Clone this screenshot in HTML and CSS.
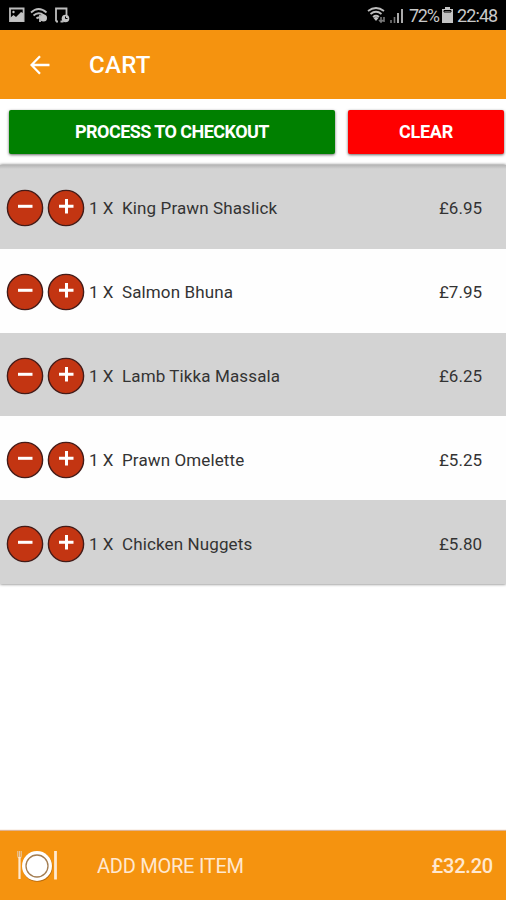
FILE: index.html
```html
<!DOCTYPE html>
<html lang="en">
<head>
<meta charset="utf-8">
<title>Cart</title>
<link rel="stylesheet" href="styles.css">
</head>
<body>
<svg class="defs" aria-hidden="true">
  <symbol id="minus" viewBox="0 0 38 38"><circle cx="19" cy="19" r="17.6"/><path d="M12 17.3h14.5"/></symbol>
  <symbol id="plus" viewBox="0 0 38 38"><circle cx="19" cy="19" r="17.6"/><path d="M12 17.3h14.5M19.500 10v14.500"/></symbol>
</svg>
<div class="status">
  <svg class="status-left" viewBox="0 0 62 17" width="62" height="17">
    <path class="line" d="M2 1.500h13.600v12.600H2z"/>
    <path class="fill" d="M2 11l3.500-3 2.500 2 5-5 2 1v8H2z"/><circle class="fill" cx="5.500" cy="5" r="1.200"/>
    <path class="line" d="M23 5.500q7.500-7 15.500 0M25.500 8.500q5-4.500 10.500 0M28.500 11.500q2-2 4 0M32 8v7"/>
    <circle class="fill" cx="35.500" cy="11" r="3.500"/>
    <path class="line" d="M48 14.500V1.500h10.500V8M48 14.500h2M52.500 14.500h3"/>
    <circle class="fill" cx="57.500" cy="11.500" r="3.800"/><path class="dark" d="M57.500 9.500v2h2"/>
  </svg>
  <div class="status-right">
    <svg viewBox="0 0 38 18" width="38" height="18">
      <path class="line" d="M1 4q8-6 16 0M3.500 7q5.500-4.500 11 0M6 10q3-2.500 6 0"/>
      <path class="fill" d="M6.500 11q2.500-2 5 0L9 14z"/>
      <path class="dim" d="M14 10v5M12 13l2 2 2-2M17 15v-5"/>
      <path class="dim" d="M24 16v-3M27.500 16v-6"/><path class="line" d="M31 16V6M35 16V2"/>
    </svg>
    <span class="percent">72%</span>
    <svg class="battery" viewBox="0 0 11 17" width="11" height="17"><path class="fill" d="M3 0h5v2h3v14H0V2h3z"/><path class="dark" d="M2 5V3.500h7V5z"/></svg>
    <span class="time">22:48</span>
  </div>
</div>
<header class="appbar">
  <svg class="back" viewBox="0 0 20 20" width="20" height="20"><path d="M19.500 10H1.800M10 1.300L1.500 10 10 18.700"/></svg>
  <h1>CART</h1>
</header>
<div class="actions">
  <button class="checkout">PROCESS TO CHECKOUT</button>
  <button class="clear">CLEAR</button>
</div>
<main class="cart">
  <div class="row"><svg class="btn"><use href="#minus"/></svg><svg class="btn"><use href="#plus"/></svg><span class="qty">1 X</span><span class="name">King Prawn Shaslick</span><span class="price">£6.95</span></div>
  <div class="row"><svg class="btn"><use href="#minus"/></svg><svg class="btn"><use href="#plus"/></svg><span class="qty">1 X</span><span class="name">Salmon Bhuna</span><span class="price">£7.95</span></div>
  <div class="row"><svg class="btn"><use href="#minus"/></svg><svg class="btn"><use href="#plus"/></svg><span class="qty">1 X</span><span class="name">Lamb Tikka Massala</span><span class="price">£6.25</span></div>
  <div class="row"><svg class="btn"><use href="#minus"/></svg><svg class="btn"><use href="#plus"/></svg><span class="qty">1 X</span><span class="name">Prawn Omelette</span><span class="price">£5.25</span></div>
  <div class="row"><svg class="btn"><use href="#minus"/></svg><svg class="btn"><use href="#plus"/></svg><span class="qty">1 X</span><span class="name">Chicken Nuggets</span><span class="price">£5.80</span></div>
</main>
<footer class="bottom">
  <svg class="plate" viewBox="0 0 42 34" width="42" height="34">
    <circle class="shade" cx="21.500" cy="17.800" r="15"/>
    <circle class="rim" cx="21" cy="17" r="15"/>
    <circle class="ring" cx="21" cy="17" r="11"/>
    <path class="prongs" d="M1.800 2v5q0 2 1.700 2t1.700-2V2M3.500 2v6"/>
    <path class="handle" d="M3.500 8v22"/>
    <path class="knife" d="M39.500 2v28.500"/>
  </svg>
  <span class="more">ADD MORE ITEM</span>
  <span class="total">£32.20</span>
</footer>
</body>
</html>
```

FILE: styles.css
```css
* { box-sizing: border-box; }
body {
  margin: 0;
  height: 900px;
  display: flex;
  flex-direction: column;
  background: #fff;
  font-family: Roboto, "Liberation Sans", sans-serif;
  overflow: hidden;
}
.defs { display: none; }
.status {
  height: 30px;
  flex: none;
  background: #000;
  color: #c9c9c9;
  display: flex;
  justify-content: space-between;
  padding: 0 9px 0 8px;
}
.status svg { fill: none; }
.status-left { margin-top: 7px; }
.status .line { stroke: #bdbdbd; stroke-width: 1.8; }
.status .dim { stroke: #777; stroke-width: 1.6; }
.status .fill { fill: #c4c4c4; }
.status .dark { stroke: #000; stroke-width: 1; }
.status-right { display: flex; align-items: center; font-size: 18px; padding-top: 1px; }
.percent { width: 31px; margin: 0 2px 0 4px; letter-spacing: -1.3px; }
.status-right > svg:first-child { margin-left: -6px; }
.battery { margin: 0 4px 0 0; }
.time { width: 40px; letter-spacing: -0.9px; }
.appbar {
  height: 69px;
  flex: none;
  background: #f5930f;
  color: #fff;
  display: flex;
  align-items: center;
  padding-left: 30px;
}
.back { fill: none; stroke: #fff; stroke-width: 2.3; }
h1 { margin: 0 0 0 39px; font-size: 24px; font-weight: 500; line-height: 28px; letter-spacing: .3px; }
.actions {
  height: 66px;
  flex: none;
  display: flex;
  gap: 13px;
  padding: 11px 2px 0 9px;
}
.actions button {
  height: 44px;
  border: 0;
  border-radius: 2px;
  padding: 0 0 2px;
  color: #fff;
  font: 700 18px Roboto, "Liberation Sans", sans-serif;
  letter-spacing: -.55px;
  box-shadow: 0 1px 3px rgba(0, 0, 0, .6);
}
.checkout { width: 326px; background: #008000; }
.actions .clear { flex: 1; background: #f00; letter-spacing: -.3px; }
.cart {
  height: 419px;
  flex: none;
  display: grid;
  grid-template-rows: repeat(5, 1fr);
  box-shadow: 0 0 3px rgba(0, 0, 0, .65);
}
.row {
  display: flex;
  align-items: center;
  padding: 3px 24px 0 6px;
  background: #fefefe;
  color: #333;
  font-size: 17px;
}
.row:nth-child(odd) { background: #d3d3d3; }
.row:first-child { background: linear-gradient(#b5b5b5, #d3d3d3 4px); }
.btn { width: 38px; height: 38px; margin-right: 3px; fill: #c33512; stroke: #431b18; stroke-width: 1.4; }
#minus path, #plus path { stroke: #fff; stroke-width: 3; }
.qty { width: 33px; margin-left: 1px; }
.name { flex: 1; letter-spacing: .12px; }
.bottom {
  height: 69px;
  flex: none;
  margin-top: auto;
  display: flex;
  align-items: center;
  padding: 0 13px 0 16px;
  color: #ffe8d0;
  background: #f5930f;
  box-shadow: 0 -1px 1px #dfb391;
}
.plate { fill: none; }
.rim { fill: #fff; }
.shade { fill: #b86b0d; }
.ring { stroke: #a37d51; stroke-width: 1.3; }
.prongs { stroke: #e5c8a6; stroke-width: 1.1; }
.handle { stroke: #ffe9d0; stroke-width: 2.2; }
.knife { stroke: #ffe9d0; stroke-width: 2.8; }
.more { margin-left: 39px; font-size: 20px; letter-spacing: -.25px; }
.total { margin-left: auto; font-size: 20px; font-weight: 500; letter-spacing: -.2px; }
```
